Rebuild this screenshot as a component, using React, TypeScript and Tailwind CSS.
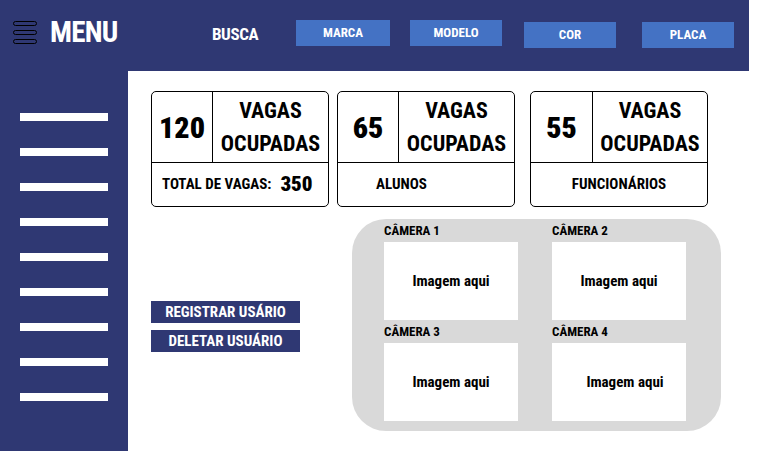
import React from "react";

const font = { fontFamily: 'Roboto, "Liberation Sans", sans-serif' };

const StatCard: React.FC<{ num: string; label: React.ReactNode; numW: string; className?: string }> = ({ num, label, numW, className }) => (
  <div className={"w-[178px] h-[116px] border border-black rounded-[5px] flex flex-col overflow-hidden " + (className || "")}>
    <div className="h-[71px] flex border-b border-black">
      <div className={numW + " border-r border-black flex items-center justify-center text-[30px] font-black text-black"}>{num}</div>
      <div className="flex-1 flex flex-col items-center justify-center text-[22px] font-bold leading-[33px] text-black">
        <span>VAGAS</span>
        <span>OCUPADAS</span>
      </div>
    </div>
    <div className="flex-1 flex items-center text-black font-bold">{label}</div>
  </div>
);

const Camera: React.FC<{ name: string; shift?: string }> = ({ name, shift }) => (
  <div className="flex flex-col">
    <div className="h-[23px] flex items-center text-[13px] font-bold text-black leading-none">{name}</div>
    <div className="w-[134px] h-[78px] bg-white flex items-center justify-center">
      <span className={"text-[15px] font-bold text-black " + (shift || "")}>Imagem aqui</span>
    </div>
  </div>
);

export default function App() {
  const navBtn = "w-[92px] h-[26px] bg-[#4472c4] text-white text-[13px] font-bold flex items-center justify-center";
  return (
    <div className="w-[758px] h-[451px] bg-white overflow-hidden font-stretch-condensed" style={font}>
      {/* header */}
      <div className="w-[749px] h-[71px] bg-[#2f3873] flex items-start pl-[13px]">
        <div className="w-[24px] mt-[21px] flex flex-col gap-[4px]">
          <div className="w-[24px] h-[5px] rounded-full border border-black" />
          <div className="w-[24px] h-[5px] rounded-full border border-black" />
          <div className="w-[24px] h-[5px] rounded-full border border-black" />
        </div>
        <div className="ml-[13px] w-[162px] mt-[13px] text-white text-[29px] tracking-tight font-bold leading-[38px]">MENU</div>
        <div className="w-[84px] mt-[23px] text-white text-[17px] tracking-tight font-bold leading-[22px]">BUSCA</div>
        <div className={navBtn + " w-[94px] mt-[20px]"}>MARCA</div>
        <div className={navBtn + " ml-[20px] mt-[20px]"}>MODELO</div>
        <div className={navBtn + " ml-[22px] mt-[22px]"}>COR</div>
        <div className={navBtn + " ml-[26px] mt-[22px]"}>PLACA</div>
      </div>

      <div className="flex">
        {/* sidebar */}
        <div className="w-[128px] h-[380px] bg-[#2f3873] flex flex-col pt-[42px] pl-[20px] gap-[27px]">
          {Array.from({ length: 9 }).map((_, i) => (
            <div key={i} className="w-[88px] h-[8px] bg-white" />
          ))}
        </div>

        {/* main */}
        <div className="flex-1 pl-[23px] pt-[20px]">
          <div className="flex">
            <StatCard
              num="120"
              numW="w-[61px]"
              label={
                <div className="flex items-center pl-[10px] text-[15px]">
                  TOTAL DE VAGAS:<span className="ml-[9px] text-[21px] font-black">350</span>
                </div>
              }
            />
            <StatCard
              className="ml-[8px]"
              num="65"
              numW="w-[61px]"
              label={<div className="pl-[38px] text-[15px]">ALUNOS</div>}
            />
            <StatCard
              className="ml-[15px]"
              num="55"
              numW="w-[62px]"
              label={<div className="w-full text-center text-[15px]">FUNCIONÁRIOS</div>}
            />
          </div>

          <div className="flex items-start mt-[12px]">
            <div className="mt-[82px] flex flex-col gap-[7px]">
              <div className="w-[149px] h-[22px] bg-[#2f3873] text-white text-[15px] font-bold flex items-center justify-center">REGISTRAR USÁRIO</div>
              <div className="w-[149px] h-[22px] bg-[#2f3873] text-white text-[15px] font-bold flex items-center justify-center">DELETAR USUÁRIO</div>
            </div>
            <div className="ml-[52px] w-[369px] h-[212px] bg-[#d9d9d9] rounded-[34px] pl-[32px] grid grid-cols-[134px_134px] gap-x-[34px] content-start">
              <Camera name="CÂMERA 1" />
              <Camera name="CÂMERA 2" />
              <Camera name="CÂMERA 3" />
              <Camera name="CÂMERA 4" shift="ml-[12px]" />
            </div>
          </div>
        </div>
      </div>
    </div>
  );
}
